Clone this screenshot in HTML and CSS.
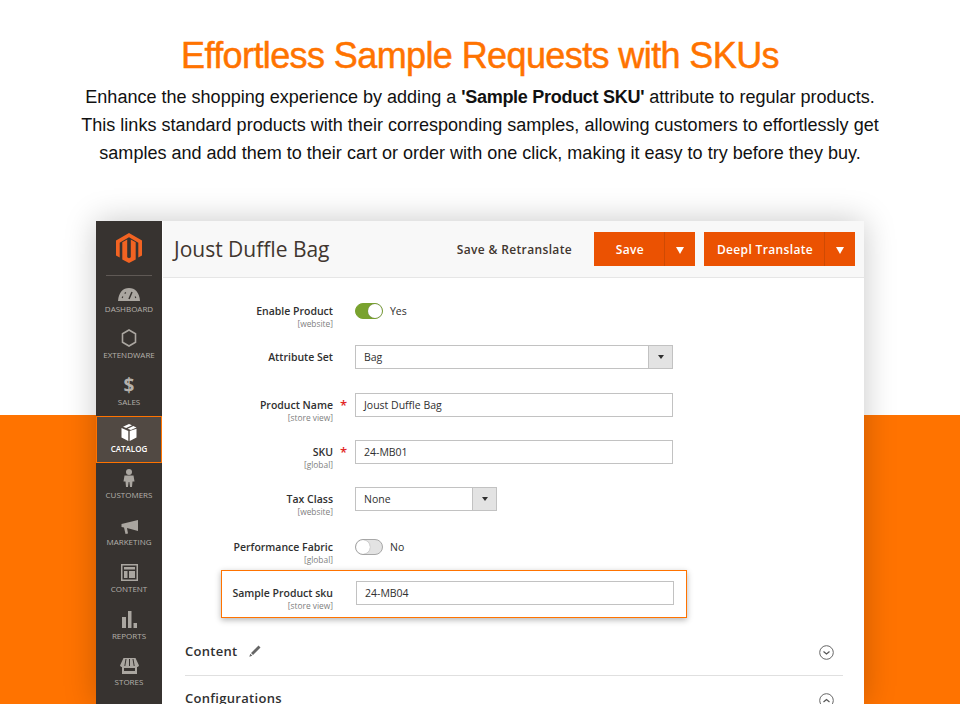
FILE: index.html

```html
<!DOCTYPE html>
<html lang="en">
<head>
    <meta charset="UTF-8">
    <meta name="viewport" content="width=device-width, initial-scale=1.0">
    <title>Effortless Sample Requests with SKUs</title>
    <link rel="stylesheet" href="styles.css">
</head>
<body>
    <!-- Heading -->
    <div class="hero">
        <h1>Effortless Sample Requests with SKUs</h1>
        <p>Enhance the shopping experience by adding a <b>'Sample Product SKU'</b> attribute to regular products.<br>
        This links standard products with their corresponding samples, allowing customers to effortlessly get<br>
        samples and add them to their cart or order with one click, making it easy to try before they buy.</p>
    </div>

    <!-- Admin window -->
    <div class="window">
        <div class="sidebar">
            <div class="logo">
                <svg width="26" height="30" viewBox="0 0 26 30">
                    <path fill="#f26322" d="M13 0 0 7.500v15l3.700 2.100V9.700L13 4.300l9.300 5.400v14.900l3.700-2.100v-15z"/>
                    <path fill="#f26322" d="M11.200 6.400 6.300 9.200v17.200l6.700 3.600 6.700-3.600V9.200l-4.900-2.800v17.800L13 25.300l-1.800-1.100z"/>
                </svg>
            </div>
            <div class="nav-item">
                <svg width="22" height="13" viewBox="0 0 22 13"><path fill="#aaa6a0" d="M11 0C5 0 .5 4.500 0 13h22C21.500 4.500 17 0 11 0z"/><path stroke="#373330" stroke-width="1.500" d="M11 11l3-7M4 9l1 .5M7 4.500l.6 1M18 9l-1 .5"/></svg>
                <span>Dashboard</span>
            </div>
            <div class="nav-item">
                <svg width="16" height="18" viewBox="0 0 16 18"><path fill="none" stroke="#aaa6a0" stroke-width="1.600" d="M8 1l6.500 3.700v8.600L8 17l-6.500-3.700V4.700z"/></svg>
                <span>Extendware</span>
            </div>
            <div class="nav-item">
                <div class="dollar">$</div>
                <span>Sales</span>
            </div>
            <div class="nav-item active">
                <svg width="16" height="17" viewBox="0 0 16 17"><path fill="#fff" d="M8 0l3 1.300L5.200 4 2 2.800zM12.300 1.900 15.500 3.500 9.900 6 6.700 4.700zM.5 4l6.800 2.900V17L.5 13.500zM15.500 4.800v8.700L8.700 17V7.100z"/></svg>
                <span>Catalog</span>
            </div>
            <div class="nav-item">
                <svg width="12" height="18" viewBox="0 0 12 18"><circle cx="6" cy="3" r="3" fill="#aaa6a0"/><path fill="#aaa6a0" d="M1.500 6.500h9l1 6H9.500L9 18H7l-.6-5h-.8L5 18H3l-.500-5.500H.5z"/></svg>
                <span>Customers</span>
            </div>
            <div class="nav-item">
                <svg width="17" height="14" viewBox="0 0 17 14"><path fill="#aaa6a0" d="M17 0v11L6 8 7 13.500l-2.500.5L3 7.500.5 7V4z"/></svg>
                <span>Marketing</span>
            </div>
            <div class="nav-item">
                <svg width="17" height="17" viewBox="0 0 17 17"><path fill="#aaa6a0" d="M0 0h17v17H0zm1.500 1.500v14h14v-14z"/><path fill="#aaa6a0" d="M3 3h11v2.500H3zM3 7h3.500v7H3zM8 7h6v7H8z"/></svg>
                <span>Content</span>
            </div>
            <div class="nav-item">
                <svg width="15" height="17" viewBox="0 0 15 17"><path fill="#aaa6a0" d="M0 6h4v11H0zM6 0h3.500v17H6zM11.500 12H15v5h-3.500z"/></svg>
                <span>Reports</span>
            </div>
            <div class="nav-item">
                <svg width="19" height="16" viewBox="0 0 19 16"><path fill="#aaa6a0" d="M3.500 0h12L19 7.500c-.5 1-1.500 1.500-2 1.500v7H2V9C1.500 9 .5 8.500 0 7.500z"/><path stroke="#373330" d="M6 1 4.800 8M9.500 1v7M13 1l1.200 7"/><path fill="#373330" d="M4 10h11v3H4z"/></svg>
                <span>Stores</span>
            </div>
        </div>

        <div class="main">
            <div class="page-header">
                <div class="page-title">Joust Duffle Bag</div>
                <div class="link-action">Save &amp; Retranslate</div>
                <div class="split-btn save-btn">
                    <div class="btn-label">Save</div>
                    <div class="btn-arrow"></div>
                </div>
                <div class="split-btn deepl-btn">
                    <div class="btn-label">Deepl Translate</div>
                    <div class="btn-arrow"></div>
                </div>
            </div>

            <div class="form">
                <div class="row">
                    <div class="label">Enable Product<small>[website]</small></div>
                    <div class="toggle on"><i></i></div>
                    <div class="toggle-text">Yes</div>
                </div>
                <div class="row row-up">
                    <div class="label">Attribute Set</div>
                    <div class="select wide"><span>Bag</span><em></em></div>
                </div>
                <div class="row">
                    <div class="label required">Product Name<small>[store view]</small></div>
                    <div class="input">Joust Duffle Bag</div>
                </div>
                <div class="row">
                    <div class="label required">SKU<small>[global]</small></div>
                    <div class="input">24-MB01</div>
                </div>
                <div class="row">
                    <div class="label">Tax Class<small>[website]</small></div>
                    <div class="select narrow"><span>None</span><em></em></div>
                </div>
                <div class="row row-down">
                    <div class="label">Performance Fabric<small>[global]</small></div>
                    <div class="toggle"><i></i></div>
                    <div class="toggle-text">No</div>
                </div>
                <div class="row highlight">
                    <div class="label">Sample Product sku<small>[store view]</small></div>
                    <div class="input">24-MB04</div>
                </div>
            </div>

            <div class="section first">
                <span>Content</span>
                <svg class="pencil" width="12" height="12" viewBox="0 0 12 12"><path fill="#666" d="M9.500 .5l2 2-7.500 7.500-2-2zM1.300 8.700l2 2L.3 11.700z"/></svg>
                <svg class="chevron" width="15" height="15" viewBox="0 0 15 15"><circle cx="7.500" cy="7.500" r="6.800" fill="none" stroke="#666" stroke-width="1"/><path fill="none" stroke="#555" stroke-width="1.200" d="M4.500 6.500l3 2.500 3-2.500"/></svg>
            </div>
            <div class="section last">
                <span>Configurations</span>
                <svg class="chevron" width="15" height="15" viewBox="0 0 15 15"><circle cx="7.500" cy="7.500" r="6.800" fill="none" stroke="#666" stroke-width="1"/><path fill="none" stroke="#555" stroke-width="1.200" d="M4.500 9l3-2.500 3 2.500"/></svg>
            </div>
        </div>
    </div>
</body>
</html>
```

FILE: styles.css

```css
:root {
    --orange: #ff7300;
    --magento: #eb5202;
    --dark: #373330;
    --text: #303030;
    --gray: #b5b1ab;
    --border: #c2c2c2;
}

html, body {
    height: 704px;
    overflow: hidden;
}

body {
    margin: 0;
    font-family: 'Open Sans', sans-serif;
    color: var(--text);
    background: linear-gradient(#fff 415px, var(--orange) 415px);
}

/* Heading */
.hero {
    height: 221px;
    text-align: center;
    font-family: 'Liberation Sans', sans-serif;
    overflow: hidden;
}

.hero h1 {
    margin: 0;
    padding-top: 35px;
    font-size: 36px;
    line-height: 42px;
    font-weight: 400;
    color: var(--orange);
    letter-spacing: -0.6px;
    -webkit-text-stroke: 0.5px var(--orange);
}

.hero p {
    margin: 6px 0 0;
    font-size: 18.050px;
    line-height: 28px;
    color: #111;
}

.hero b {
    letter-spacing: -0.3px;
}

/* Admin window */
.window {
    display: flex;
    width: 768px;
    height: 483px;
    margin-left: 96px;
    background: #fff;
    box-shadow: 0 0 30px rgba(0, 0, 0, 0.22);
}

.sidebar {
    width: 66px;
    flex-shrink: 0;
    background: var(--dark);
    margin-right: 1px;
}

.logo {
    height: 55px;
    padding-top: 12px;
    box-sizing: border-box;
    text-align: center;
    border-bottom: 1px solid #5f5955;
    margin: 0 10px;
    display: flex;
    justify-content: center;
}

.nav-item {
    height: 46.700px;
    box-sizing: border-box;
    display: flex;
    flex-direction: column;
    align-items: center;
    justify-content: flex-end;
    padding-bottom: 8px;
    gap: 2px;
    border: 1px solid transparent;
    color: var(--gray);
}

.nav-item span {
    font-size: 8px;
    line-height: 11px;
    text-transform: uppercase;
    white-space: nowrap;
}

.nav-item.active {
    background: #514943;
    border-color: var(--orange);
    color: #fff;
    font-weight: 600;
}

.dollar {
    font-size: 19px;
    line-height: 18px;
    font-weight: 700;
}

.main {
    flex: 1;
    min-width: 0;
}

/* Page header */
.page-header {
    height: 57px;
    box-sizing: border-box;
    display: flex;
    align-items: center;
    padding: 0 9px 0 11px;
    background: #f8f8f8;
    border-bottom: 1px solid #e6e6e6;
}

.page-title {
    font-size: 21px;
    color: #41362f;
    flex: 1;
}

.link-action {
    font-size: 12px;
    font-weight: 600;
    letter-spacing: 0.35px;
    color: #41362f;
    margin-right: 22px;
}

.split-btn {
    display: flex;
    height: 34px;
    background: var(--magento);
    color: #fff;
    font-size: 12px;
    font-weight: 600;
    letter-spacing: 0.35px;
}

.deepl-btn {
    margin-left: 9px;
}

.btn-label {
    display: flex;
    align-items: center;
    justify-content: center;
    padding-left: 2px;
    box-sizing: border-box;
    border-right: 1px solid #cf4a03;
}

.save-btn .btn-label {
    width: 71px;
}

.deepl-btn .btn-label {
    width: 121px;
}

.btn-arrow {
    width: 30px;
    display: flex;
    align-items: center;
    justify-content: center;
}

.btn-arrow::after {
    content: "";
    border-left: 4.500px solid transparent;
    border-right: 4.500px solid transparent;
    border-top: 7px solid #fff;
    margin-top: 2px;
}

/* Form */
.form {
    padding-top: 21px;
}

.row {
    display: flex;
    height: 47px;
    box-sizing: border-box;
}

.row-up {
    margin: -1px 0 1px;
}

.row-down {
    margin: 1px 0 -1px;
}

.label {
    width: 170px;
    margin-right: 22px;
    text-align: right;
    font-size: 10.500px;
    font-weight: 600;
    line-height: 24px;
    color: var(--text);
    position: relative;
    white-space: nowrap;
}

.label small {
    display: block;
    font-size: 8.400px;
    font-weight: 400;
    line-height: 9px;
    margin-top: -4px;
    color: #808080;
}

.required::after {
    content: "*";
    position: absolute;
    right: -14px;
    top: 0;
    color: #e22626;
    font-size: 13px;
}

.input, .select {
    height: 24px;
    box-sizing: border-box;
    border: 1px solid var(--border);
    background: #fff;
    font-size: 10.500px;
    line-height: 22px;
    padding-left: 8px;
    color: var(--text);
}

.input {
    width: 318px;
}

.select {
    display: flex;
    justify-content: space-between;
    padding-right: 0;
}

.select.wide {
    width: 318px;
}

.select.narrow {
    width: 142px;
}

.select em {
    width: 23px;
    background: #e3e3e3;
    border-left: 1px solid var(--border);
    display: flex;
    align-items: center;
    justify-content: center;
}

.select em::after {
    content: "";
    border-left: 3.500px solid transparent;
    border-right: 3.500px solid transparent;
    border-top: 4px solid #303030;
}

.toggle {
    width: 28px;
    height: 16px;
    margin-top: 4px;
    border: 1px solid #a8a8a8;
    border-radius: 9px;
    box-sizing: border-box;
    background: #e3e3e3;
    position: relative;
}

.toggle i {
    position: absolute;
    left: 0;
    top: 0;
    width: 14px;
    height: 14px;
    border-radius: 50%;
    background: #fff;
    box-shadow: 0 0 1px #777;
}

.toggle.on {
    background: #79a22e;
    border-color: #79a22e;
}

.toggle.on i {
    left: 12px;
}

.toggle-text {
    font-size: 10.500px;
    line-height: 24px;
    margin-left: 7px;
}

.row.highlight {
    width: 466px;
    height: 48px;
    margin: -12px 0 0 58px;
    padding-top: 10px;
    border: 1px solid var(--orange);
    box-shadow: 0 2px 6px rgba(0, 0, 0, 0.3);
}

.highlight .label {
    width: 111px;
    margin-right: 23px;
}

/* Collapsible sections */
.section {
    display: flex;
    align-items: center;
    margin: 0 21px 0 22px;
    font-size: 13px;
    font-weight: 600;
    letter-spacing: 0.3px;
    color: var(--text);
    padding-top: 1px;
    box-sizing: border-box;
}

.section.first {
    height: 49px;
    margin-top: 9px;
    padding-bottom: 2px;
    border-bottom: 1px solid #e0e0e0;
}

.section.last {
    height: 43px;
}

.pencil {
    margin-left: 11px;
}

.chevron {
    margin-left: auto;
    margin-right: 9px;
    margin-top: 4px;
}
```
